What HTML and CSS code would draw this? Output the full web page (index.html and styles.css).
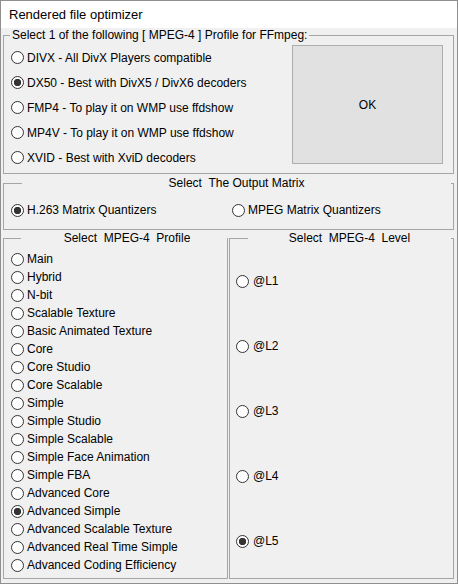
FILE: index.html
```html
<!DOCTYPE html>
<html>
<head>
<meta charset="utf-8">
<title>Rendered file optimizer</title>
<link rel="stylesheet" href="styles.css">
</head>
<body>
<div class="window">
  <div class="titlebar">Rendered file optimizer</div>
  <div class="content">
    <fieldset class="group group-codec">
      <legend class="legend-left">Select 1 of the following [ MPEG-4 ] Profile for FFmpeg:</legend>
      <div class="codec-body">
        <div class="codec-list">
          <label class="radio codec"><input type="radio" name="codec">DIVX - All DivX Players compatible</label>
          <label class="radio codec"><input type="radio" name="codec" checked>DX50 - Best with DivX5 / DivX6 decoders</label>
          <label class="radio codec"><input type="radio" name="codec">FMP4 - To play it on WMP use ffdshow</label>
          <label class="radio codec"><input type="radio" name="codec">MP4V - To play it on WMP use ffdshow</label>
          <label class="radio codec"><input type="radio" name="codec">XVID - Best with XviD decoders</label>
        </div>
        <button class="ok" type="button">OK</button>
      </div>
    </fieldset>

    <fieldset class="group group-matrix">
      <legend class="legend-matrix">Select&nbsp; The Output Matrix</legend>
      <div class="matrix-row">
        <label class="radio"><input type="radio" name="matrix" checked>H.263 Matrix Quantizers</label>
        <label class="radio"><input type="radio" name="matrix">MPEG Matrix Quantizers</label>
      </div>
    </fieldset>

    <div class="bottom">
      <fieldset class="group group-profile">
        <legend class="legend-profile">Select&nbsp; MPEG-4&nbsp; Profile</legend>
        <div class="profile-list">
          <label class="radio row"><input type="radio" name="profile">Main</label>
          <label class="radio row"><input type="radio" name="profile">Hybrid</label>
          <label class="radio row"><input type="radio" name="profile">N-bit</label>
          <label class="radio row"><input type="radio" name="profile">Scalable Texture</label>
          <label class="radio row"><input type="radio" name="profile">Basic Animated Texture</label>
          <label class="radio row"><input type="radio" name="profile">Core</label>
          <label class="radio row"><input type="radio" name="profile">Core Studio</label>
          <label class="radio row"><input type="radio" name="profile">Core Scalable</label>
          <label class="radio row"><input type="radio" name="profile">Simple</label>
          <label class="radio row"><input type="radio" name="profile">Simple Studio</label>
          <label class="radio row"><input type="radio" name="profile">Simple Scalable</label>
          <label class="radio row"><input type="radio" name="profile">Simple Face Animation</label>
          <label class="radio row"><input type="radio" name="profile">Simple FBA</label>
          <label class="radio row"><input type="radio" name="profile">Advanced Core</label>
          <label class="radio row"><input type="radio" name="profile" checked>Advanced Simple</label>
          <label class="radio row"><input type="radio" name="profile">Advanced Scalable Texture</label>
          <label class="radio row"><input type="radio" name="profile">Advanced Real Time Simple</label>
          <label class="radio row"><input type="radio" name="profile">Advanced Coding Efficiency</label>
        </div>
      </fieldset>
      <fieldset class="group group-level">
        <legend class="legend-level">Select&nbsp; MPEG-4&nbsp; Level</legend>
        <div class="level-list">
          <label class="radio row level"><input type="radio" name="level">@L1</label>
          <label class="radio row level"><input type="radio" name="level">@L2</label>
          <label class="radio row level"><input type="radio" name="level">@L3</label>
          <label class="radio row level"><input type="radio" name="level">@L4</label>
          <label class="radio row level"><input type="radio" name="level" checked>@L5</label>
        </div>
      </fieldset>
    </div>
  </div>
</div>
</body>
</html>
```

FILE: styles.css
```css
* {
  box-sizing: border-box;
}

html,
body {
  margin: 0;
  padding: 0;
  background: #f0f0f0;
}

body {
  font-family: "Liberation Sans", Arial, sans-serif;
  font-size: 12px;
  color: #000;
}

.window {
  width: 458px;
  height: 584px;
  border: 1px solid #8f8f8f;
  display: flex;
  flex-direction: column;
  background: #f0f0f0;
}

.titlebar {
  height: 27px;
  line-height: 27px;
  padding-left: 8px;
  background: #fff;
  font-size: 13px;
  flex: none;
}

.content {
  flex: 1;
  display: flex;
  flex-direction: column;
  padding: 0 3px 4px 2px;
  min-height: 0;
}

.group {
  margin: 0;
  padding: 0;
  border: 1px solid #a5a5a5;
  min-width: 0;
}

legend {
  padding: 0;
  line-height: 14px;
  white-space: nowrap;
}

.legend-left {
  margin-left: 6px;
  padding: 0 2px;
}

.legend-matrix {
  margin-left: 8px;
  width: 429px;
  text-align: center;
}

.legend-profile {
  margin-left: 8px;
  width: 206px;
  padding-left: 7px;
  text-align: center;
}

.legend-level {
  margin-left: 8px;
  width: 203px;
  text-align: center;
}

/* radios */
.radio {
  display: flex;
  align-items: center;
  gap: 3px;
  white-space: nowrap;
  line-height: 14px;
}

.radio input {
  -webkit-appearance: none;
  appearance: none;
  width: 13px;
  height: 13px;
  margin: 0;
  border: 1px solid #333;
  border-radius: 50%;
  background: #fff;
  flex: none;
}

.radio input:checked {
  background: radial-gradient(circle, #333 0 3.4px, #fff 4px);
}

/* group 1 */
.codec-body {
  display: flex;
  justify-content: space-between;
  align-items: flex-start;
  padding: 3px 10px 3px 7px;
}

.codec {
  height: 25px;
}

.ok {
  width: 151px;
  height: 119px;
  margin: 0;
  padding: 0;
  background: #e1e1e1;
  border: 1px solid #adadad;
  font-family: "Liberation Sans", Arial, sans-serif;
  font-size: 12px;
  color: #000;
}

/* group 2 */
.group-matrix {
  margin-top: 2px;
}

.matrix-row {
  display: grid;
  grid-template-columns: 221px auto;
  padding: 11px 0 10px 7px;
}

.matrix-row .radio {
  height: 18px;
}

/* group 3 */
.bottom {
  flex: 1;
  display: grid;
  grid-template-columns: 225px 225px;
  column-gap: 1px;
  margin-top: 1px;
}

.row {
  height: 18px;
}

.profile-list {
  display: flex;
  flex-direction: column;
  padding: 5px 0 0 7px;
}

.level-list {
  display: flex;
  flex-direction: column;
  gap: 47px;
  padding: 27px 0 0 6px;
}

.level {
  gap: 4px;
}
```
